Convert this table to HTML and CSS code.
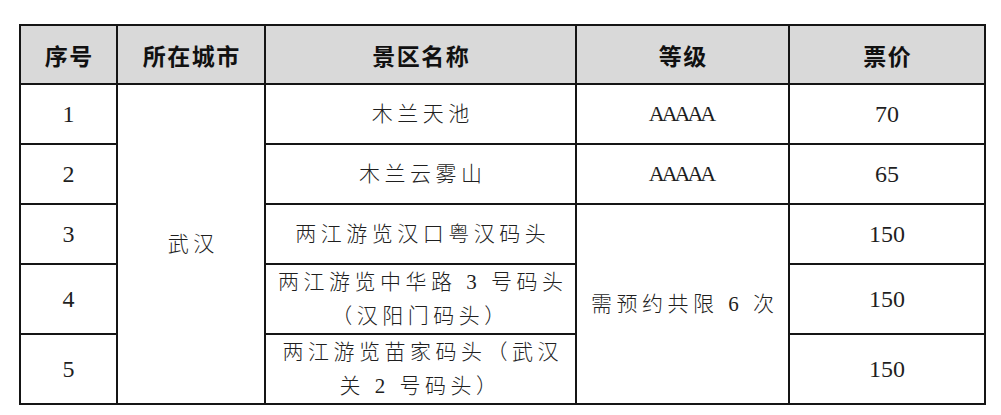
FILE: index.html
```html
<!DOCTYPE html>
<html lang="zh-CN">
<head>
<meta charset="utf-8">
<title>景区票价表</title>
<link rel="stylesheet" href="styles.css">
</head>
<body>
<table class="grid">
  <colgroup>
    <col class="c-no">
    <col class="c-city">
    <col class="c-name">
    <col class="c-level">
    <col class="c-price">
  </colgroup>
  <thead>
    <tr class="r-head">
      <th>序号</th>
      <th>所在城市</th>
      <th>景区名称</th>
      <th>等级</th>
      <th>票价</th>
    </tr>
  </thead>
  <tbody>
    <tr class="r-1">
      <td class="num">1</td>
      <td class="cn" rowspan="5">武汉</td>
      <td class="cn">木兰天池</td>
      <td class="grade">AAAAA</td>
      <td class="num">70</td>
    </tr>
    <tr class="r-1">
      <td class="num">2</td>
      <td class="cn">木兰云雾山</td>
      <td class="grade">AAAAA</td>
      <td class="num">65</td>
    </tr>
    <tr class="r-1">
      <td class="num">3</td>
      <td class="cn">两江游览汉口粤汉码头</td>
      <td class="cn" rowspan="3">需预约共限 6 次</td>
      <td class="num">150</td>
    </tr>
    <tr class="r-2">
      <td class="num">4</td>
      <td class="cn two">两江游览中华路 3 号码头<br>（汉阳门码头）</td>
      <td class="num">150</td>
    </tr>
    <tr class="r-3">
      <td class="num">5</td>
      <td class="cn two">两江游览苗家码头（武汉<br>关 2 号码头）</td>
      <td class="num">150</td>
    </tr>
  </tbody>
</table>
</body>
</html>
```

FILE: styles.css
```css
html, body {
  margin: 0;
  padding: 0;
  background: #ffffff;
}

body {
  padding: 24px 0 0 19px;
}

.grid {
  border-collapse: collapse;
  table-layout: fixed;
  width: 967px;
  color: #1f1f1f;
  font-family: "Liberation Serif", "Noto Sans CJK SC", serif;
}

.c-no { width: 97px; }
.c-city { width: 148px; }
.c-name { width: 311px; }
.c-level { width: 213px; }
.c-price { width: 196px; }

.grid th,
.grid td {
  border: 2px solid #151515;
  padding: 0;
  text-align: center;
  vertical-align: middle;
}

.grid th {
  background: #d9d9d9;
  color: #111111;
  font-family: "Noto Sans CJK SC", sans-serif;
  font-weight: 700;
  font-size: 23px;
  letter-spacing: 1.5px;
  text-indent: 1.5px;
}

.r-head { height: 59px; }
.r-1 { height: 60px; }
.r-2 { height: 69px; }
.r-3 { height: 68px; }

.num {
  font-size: 24px;
}

.cn {
  font-size: 21px;
  font-weight: 300;
  letter-spacing: 4.5px;
  text-indent: 4.5px;
  line-height: 34px;
}

.grade {
  font-size: 22px;
  letter-spacing: -3px;
  text-indent: -3px;
}
```
